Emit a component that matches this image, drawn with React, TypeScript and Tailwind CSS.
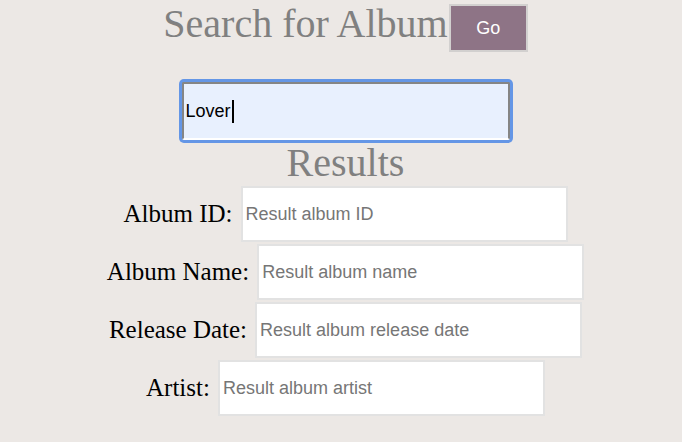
import React from "react";

const serif = { fontFamily: '"Liberation Serif", "Times New Roman", serif' };

const rows = [
    { label: "Album ID:", placeholder: "Result album ID" },
    { label: "Album Name:", placeholder: "Result album name" },
    { label: "Release Date:", placeholder: "Result album release date" },
    { label: "Artist:", placeholder: "Result album artist" },
];

export default function App() {
    return (
        <div className="w-[682px] h-[442px] overflow-hidden bg-[#ece8e5] pl-[9px] font-['Liberation_Sans',Arial,sans-serif]">
            <div className="flex flex-col items-center">
                {/* Search header */}
                <div className="flex items-start">
                    <h1 style={serif} className="mt-[1px] text-[40px] leading-[46px] text-[#808080] font-normal">
                        Search for Album
                    </h1>
                    <button className="mt-[4px] w-[79px] h-[48px] ml-[1px] bg-[#8e7486] border-2 border-[#d2d0cf] text-white text-[18px]">
                        Go
                    </button>
                </div>

                {/* Search input */}
                <div className="relative mt-[30px]">
                    <input
                        readOnly
                        value="Lover"
                        className="w-[328px] h-[58px] bg-[#e8f0fe] text-black text-[18px] pl-[2px] rounded-[2px] border-2 border-[#858585] border-b-white outline-none ring-[3px] ring-[#6496e6]"
                    />
                    <span className="absolute left-[50px] top-[18px] w-[2px] h-[23px] bg-black" />
                </div>

                {/* Results */}
                <h2 style={serif} className="text-[40px] leading-[46px] text-[#808080] font-normal">
                    Results
                </h2>

                <div className="flex flex-col items-center gap-[2px]">
                    {rows.map((r) => (
                        <div key={r.label} className="flex items-center gap-[8px]">
                            <span style={serif} className="text-[25px] text-black">
                                {r.label}
                            </span>
                            <input
                                readOnly
                                placeholder={r.placeholder}
                                className="w-[327px] h-[56px] bg-white border-2 border-[#e2e2e2] px-[3px] text-[18px] placeholder:text-[#767676] outline-none"
                            />
                        </div>
                    ))}
                </div>
            </div>
        </div>
    );
}
